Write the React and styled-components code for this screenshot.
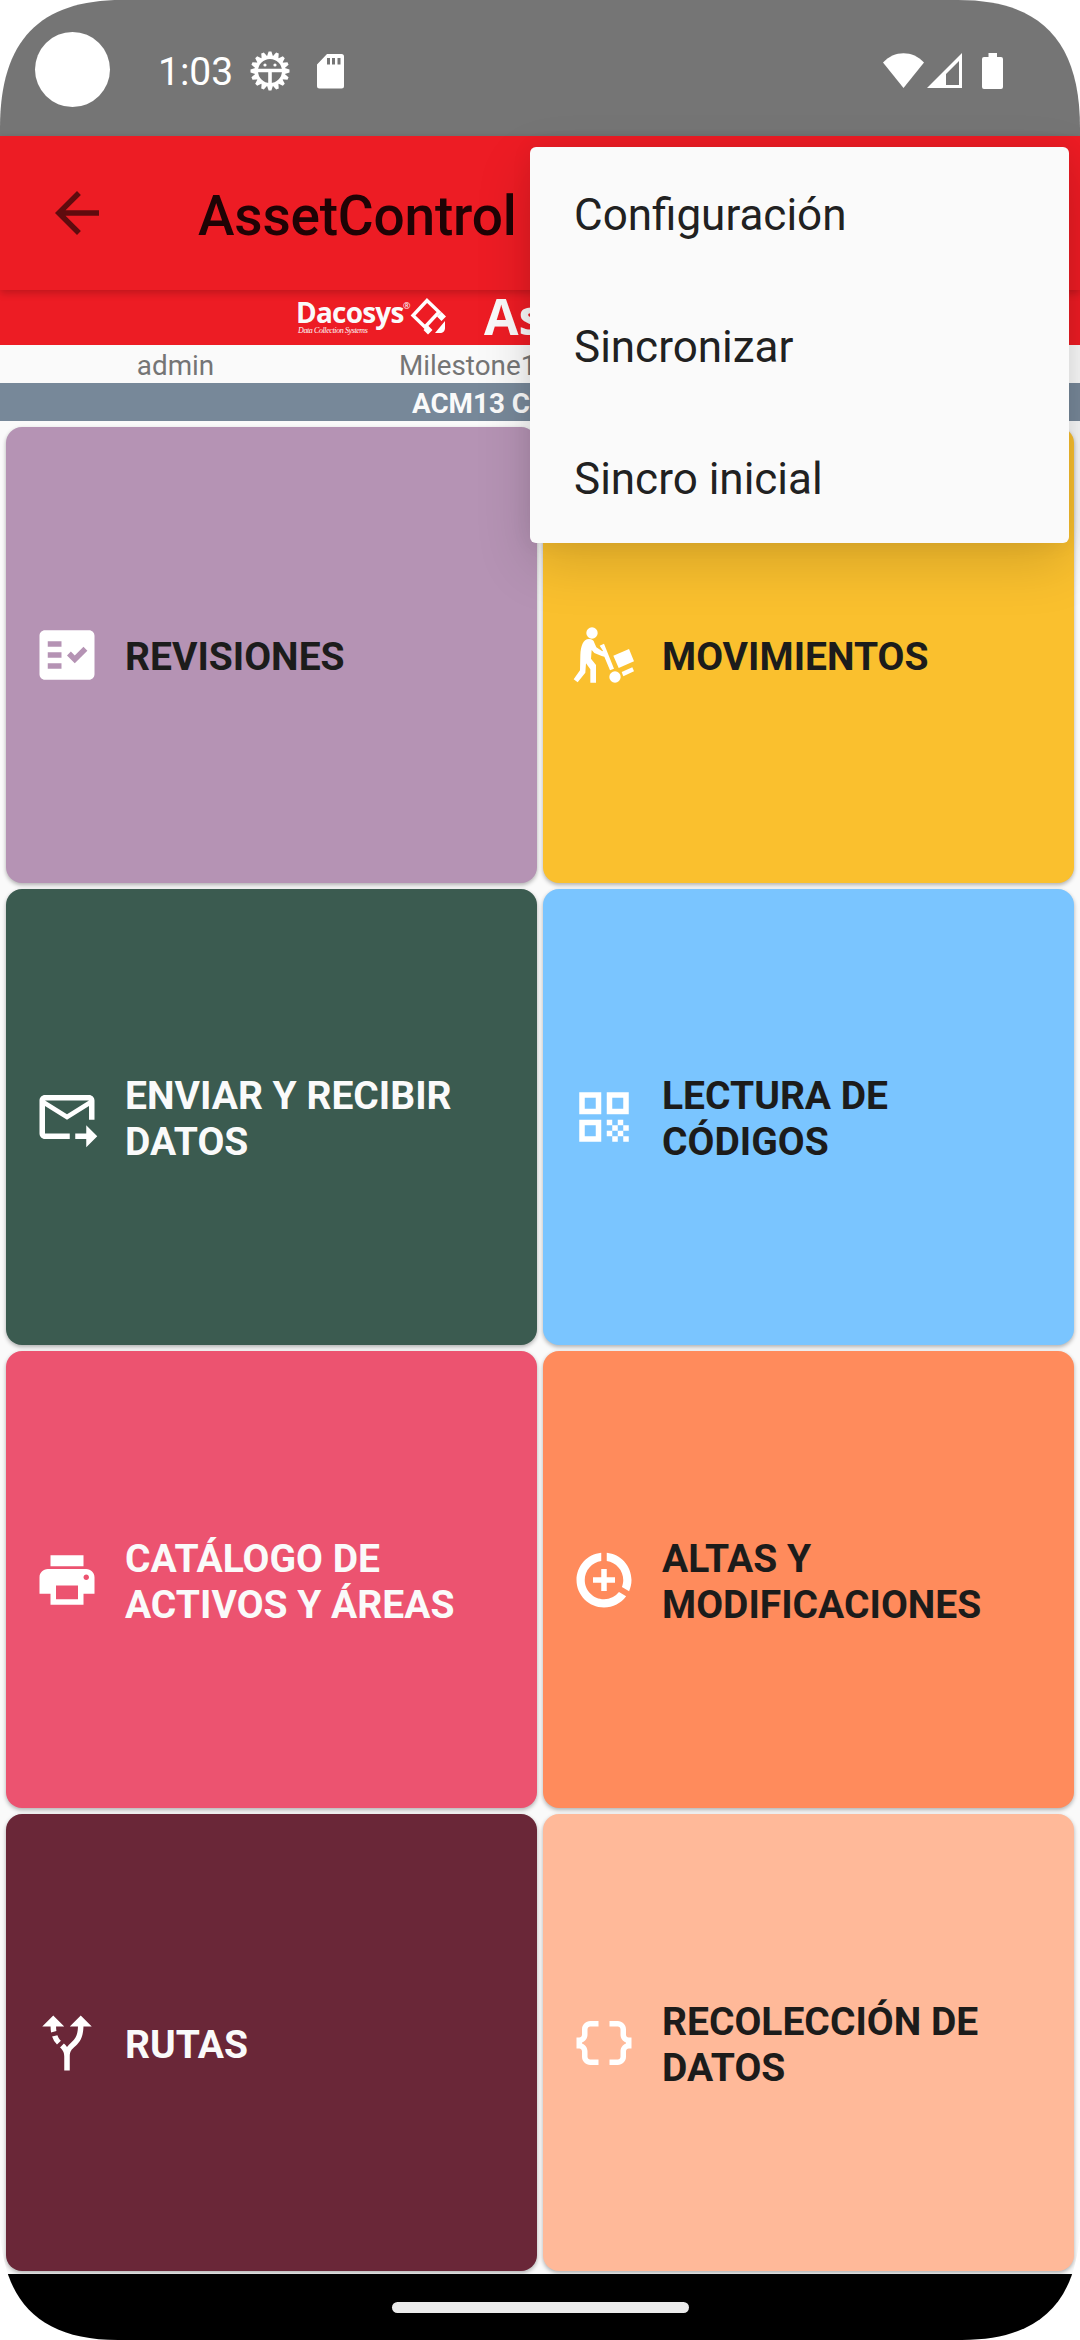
import React from 'react';
import styled, { createGlobalStyle } from 'styled-components';
import {
  MdArrowBack,
  MdFactCheck,
  MdOutlineForwardToInbox,
  MdQrCode,
  MdPrint,
  MdDataSaverOn,
  MdAltRoute,
  MdDataObject,
} from 'react-icons/md';

const GlobalStyle = createGlobalStyle`
  * { box-sizing: border-box; }
  body {
    margin: 0;
    background: #ffffff;
    font-family: Roboto, "Liberation Sans", sans-serif;
  }
`;

const Screen = styled.div`
  position: relative;
  display: flex;
  flex-direction: column;
  width: 1080px;
  height: 2340px;
  overflow: hidden;
  background: #fafafa;
  clip-path: path("M0 128C0 40 40 0 122 0H958C1040 0 1080 40 1080 128V2230C1076 2302 1040 2340 962 2340H118C40 2340 4 2302 0 2230Z");
`;

const StatusBar = styled.div`
  flex: none;
  display: flex;
  align-items: flex-start;
  height: 136px;
  background: #757575;
  color: #ffffff;
`;

const Camera = styled.div`
  width: 75px;
  height: 75px;
  margin: 32px 0 0 35px;
  border-radius: 50%;
  background: #ffffff;
`;

const Clock = styled.span`
  width: 88px;
  margin: 49px 0 0 48px;
  font-size: 39px;
  line-height: 46px;
`;

const StatusGlyph = styled.svg`
  flex: none;
  display: block;
  width: ${(p) => p.$w}px;
  height: ${(p) => p.$h}px;
  margin: ${(p) => p.$top}px 0 0 ${(p) => p.$left || 0}px;
`;

const StatusRight = styled.div`
  display: flex;
  margin-left: auto;
  padding-right: 77px;
`;

const AppBar = styled.header`
  flex: none;
  position: relative;
  display: flex;
  align-items: center;
  gap: 88px;
  height: 154px;
  padding-left: 44px;
  background: #ed1c24;
  box-shadow: 0 3px 8px rgba(0, 0, 0, 0.2);
`;

const BackIcon = styled(MdArrowBack)`
  width: 66px;
  height: 66px;
  color: #5f0b0e;
`;

const Title = styled.h1`
  margin: 5px 0 0;
  color: #1f0305;
  font-size: 55px;
  font-weight: 500;
  line-height: 64px;
  letter-spacing: -0.2px;
`;

const Banner = styled.div`
  flex: none;
  display: flex;
  align-items: flex-start;
  height: 55px;
  padding: 6px 0 0 296px;
  background: #ed1c24;
  color: #fafafa;
  font-family: "Open Sans", "Noto Sans", sans-serif;
`;

const Brand = styled.div`
  display: flex;
  flex-direction: column;
  width: 107px;
  padding-top: 2px;
`;

const BrandName = styled.span`
  font-size: 28px;
  font-weight: 700;
  line-height: 28px;
  letter-spacing: -0.8px;
  white-space: nowrap;
`;

const BrandTag = styled.span`
  padding: 1px 0 0 2px;
  font-family: "Liberation Serif", serif;
  font-size: 8px;
  font-style: italic;
  line-height: 8px;
  letter-spacing: -0.4px;
  white-space: nowrap;
`;

const Registered = styled.span`
  width: 7px;
  margin-top: 2px;
  font-size: 9px;
  line-height: 16px;
`;

const BrandMark = styled.svg`
  flex: none;
  width: 37px;
  height: 38px;
  margin-top: 1px;
`;

const ProductName = styled.span`
  margin: -8px 0 0 37px;
  font-size: 50px;
  font-weight: 700;
  line-height: 56px;
`;

const SessionRow = styled.div`
  flex: none;
  display: grid;
  grid-template-columns: 351px 1fr;
  align-items: center;
  height: 38px;
  padding-top: 3px;
  color: #757575;
  font-size: 27.8px;
  line-height: 35px;
`;

const User = styled.span`
  text-align: center;
`;

const Device = styled.span`
  padding-left: 48px;
`;

const SiteBar = styled.div`
  flex: none;
  height: 38px;
  padding-left: 412px;
  background: #778899;
  color: #fafafa;
  font-size: 27.8px;
  font-weight: 700;
  line-height: 41px;
`;

const TileGrid = styled.main`
  flex: 1;
  display: grid;
  grid-template-columns: repeat(2, 1fr);
  grid-template-rows: repeat(2, 456px) repeat(2, 1fr);
  gap: 6px;
  padding: 6px 6px 3px;
`;

const Tile = styled.button`
  display: flex;
  align-items: center;
  gap: 25px;
  min-width: 0;
  padding: 0 28px;
  border: 0;
  border-radius: 16px;
  background: ${(p) => p.$bg};
  box-shadow: 0 2px 4px rgba(0, 0, 0, 0.3);
  color: #ffffff;
  font-family: inherit;
  text-align: left;

  & > svg {
    flex: none;
    width: 66px;
    height: 66px;
  }
`;

const TileLabel = styled.span`
  padding-top: 4px;
  color: ${(p) => (p.$light ? '#fafafa' : '#1c1c1b')};
  font-size: 39px;
  font-weight: 700;
  line-height: 46px;
  white-space: pre-line;
`;

const NavBar = styled.div`
  flex: none;
  display: flex;
  align-items: center;
  justify-content: center;
  height: 66px;
  background: #000000;
`;

const HomeHandle = styled.div`
  width: 297px;
  height: 11px;
  border-radius: 6px;
  background: #ebebeb;
`;

const Menu = styled.ul`
  position: absolute;
  top: 147px;
  right: 11px;
  width: 539px;
  margin: 0;
  padding: 0;
  border-radius: 6px;
  background: #fafafa;
  box-shadow: 0 20px 55px rgba(0, 0, 0, 0.15), 0 0 22px rgba(0, 0, 0, 0.06);
  list-style: none;
`;

const MenuItem = styled.li`
  height: 132px;
  padding: 2px 44px 0;
  color: #212121;
  font-size: 44px;
  line-height: 132px;
`;

function MoverIcon() {
  return (
    <svg viewBox="93 66 198 198" fill="currentColor">
      <circle cx="156" cy="99" r="17" />
      <path d="M147 117C156 117 161 121 163 128L169 142L187 154L189 152L179 137L192 131L222 206L210 211L193 170L185 168L163 159L155 150L153 176L168 195V248H151V208L138 190L136 218L113 247L101 238L120 211L121 165C122 139 129 117 147 117Z" />
      <path d="M220 167L267 147L282 184L236 204Z" />
      <circle cx="225" cy="231" r="17" />
      <path d="M245 216L277 202L282 214L250 229Z" />
    </svg>
  );
}

const teeth = Array.from({ length: 16 }, (_, i) => i * 22.5);

function DebugGlyph() {
  return (
    <StatusGlyph $w={40} $h={40} $top={51} $left={4} viewBox="-20 -20 40 40">
      {teeth.map((a) => (
        <path key={a} d="M-3.200 -14L-1.400 -19.500H1.400L3.200 -14z" fill="#fff" transform={`rotate(${a})`} />
      ))}
      <circle r="13.600" fill="none" stroke="#fff" strokeWidth="3.200" />
      <path d="M-13 -0.500H13M0 -0.500V14" stroke="#fff" strokeWidth="3.600" />
      <circle cx="-5" cy="-6" r="1.600" fill="#fff" />
      <circle cx="5" cy="-6" r="1.600" fill="#fff" />
    </StatusGlyph>
  );
}

const tiles = [
  { label: 'REVISIONES', bg: '#b593b4', Icon: MdFactCheck },
  { label: 'MOVIMIENTOS', bg: '#fac02e', Icon: MoverIcon },
  { label: 'ENVIAR Y RECIBIR\nDATOS', bg: '#3b5b50', Icon: MdOutlineForwardToInbox, light: true },
  { label: 'LECTURA DE\nCÓDIGOS', bg: '#7ac5ff', Icon: MdQrCode },
  { label: 'CATÁLOGO DE\nACTIVOS Y ÁREAS', bg: '#ec5370', Icon: MdPrint, light: true },
  { label: 'ALTAS Y\nMODIFICACIONES', bg: '#ff8b5c', Icon: MdDataSaverOn },
  { label: 'RUTAS', bg: '#6a2738', Icon: MdAltRoute, light: true },
  { label: 'RECOLECCIÓN DE\nDATOS', bg: '#ffb999', Icon: MdDataObject },
];

export default function App() {
  return (
    <>
      <GlobalStyle />
      <Screen>
        <StatusBar>
          <Camera />
          <Clock>1:03</Clock>
          <DebugGlyph />
          <StatusGlyph $w={27} $h={35} $top={54} $left={27} viewBox="0 0 27 35">
            <path
              fillRule="evenodd"
              fill="#fff"
              d="M10 0H24.500a2.500 2.500 0 0 1 2.500 2.500V32a2.500 2.500 0 0 1-2.500 2.500H2.500A2.500 2.500 0 0 1 0 32V10.500zM10 4v6.500h3V4zM15 4v6.500h3V4zM20.500 4v6.500h3V4z"
            />
          </StatusGlyph>
          <StatusRight>
            <StatusGlyph $w={41} $h={35} $top={53} viewBox="0 0 41 35">
              <path fill="#fff" d="M0 9.500C11-3 30-3 41 9.500L20.500 35z" />
            </StatusGlyph>
            <StatusGlyph $w={35} $h={35} $top={53} $left={3} viewBox="0 0 35 35">
              <path fill="#fff" fillRule="evenodd" d="M35 0V35H0zM32 8L19 21V32H32z" />
            </StatusGlyph>
            <StatusGlyph $w={21} $h={36} $top={53} $left={20} viewBox="0 0 21 36">
              <path
                fill="#fff"
                d="M6.500 0h8.500v4h4a2 2 0 0 1 2 2v28a2 2 0 0 1-2 2H2a2 2 0 0 1-2-2V6a2 2 0 0 1 2-2h4.500z"
              />
            </StatusGlyph>
          </StatusRight>
        </StatusBar>

        <AppBar>
          <BackIcon />
          <Title>AssetControl</Title>
        </AppBar>

        <Banner>
          <Brand>
            <BrandName>Dacosys</BrandName>
            <BrandTag>Data Collection Systems</BrandTag>
          </Brand>
          <Registered>®</Registered>
          <BrandMark viewBox="0 0 37 38">
            <path fill="none" stroke="#fff" strokeWidth="3.400" d="M17 3.500L29 15 15 30 3 18.500z" />
            <path fill="#fff" d="M31.500 15l4.500 4.500L31.500 24l-4.500-4.500zM18 28.500L22.500 33 18 37.500 13.500 33zM35 24v7c0 3-2 5-5 5h-5z" />
          </BrandMark>
          <ProductName>As</ProductName>
        </Banner>

        <SessionRow>
          <User>admin</User>
          <Device>Milestone1</Device>
        </SessionRow>
        <SiteBar>ACM13 C</SiteBar>

        <TileGrid>
          {tiles.map(({ label, bg, Icon, light }) => (
            <Tile key={label} $bg={bg}>
              <Icon />
              <TileLabel $light={light}>{label}</TileLabel>
            </Tile>
          ))}
        </TileGrid>

        <NavBar>
          <HomeHandle />
        </NavBar>

        <Menu>
          <MenuItem>Configuración</MenuItem>
          <MenuItem>Sincronizar</MenuItem>
          <MenuItem>Sincro inicial</MenuItem>
        </Menu>
      </Screen>
    </>
  );
}
